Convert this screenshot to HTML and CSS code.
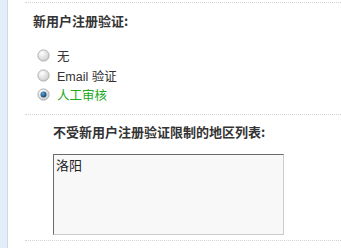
FILE: index.html
```html
<!DOCTYPE html>
<html lang="zh-CN">
<head>
<meta charset="utf-8">
<link rel="stylesheet" href="styles.css">
</head>
<body>
<div class="page">
  <div class="side"></div>
  <div class="main">
    <div class="row row-top">
      <h3 class="title">新用户注册验证:</h3>
      <ul class="options">
        <li class="opt">
          <svg class="radio" width="13" height="13" viewBox="0 0 13 13"><defs><radialGradient id="g1" cx="0.35" cy="0.3" r="0.8"><stop offset="0" stop-color="#ffffff"/><stop offset="1" stop-color="#c9c9c9"/></radialGradient></defs><circle cx="6.5" cy="6.5" r="5.6" fill="url(#g1)" stroke="#a8a8a8" stroke-width="0.9"/></svg>
          <span>无</span>
        </li>
        <li class="opt">
          <svg class="radio" width="13" height="13" viewBox="0 0 13 13"><circle cx="6.5" cy="6.5" r="5.6" fill="url(#g1)" stroke="#a8a8a8" stroke-width="0.9"/></svg>
          <span>Email 验证</span>
        </li>
        <li class="opt on">
          <svg class="radio" width="13" height="13" viewBox="0 0 13 13"><defs><radialGradient id="g2" cx="0.4" cy="0.35" r="0.7"><stop offset="0" stop-color="#5fa3d6"/><stop offset="1" stop-color="#0f3c66"/></radialGradient></defs><circle cx="6.5" cy="6.5" r="5.6" fill="url(#g1)" stroke="#a8a8a8" stroke-width="0.9"/><circle cx="6.5" cy="6.5" r="3" fill="url(#g2)"/></svg>
          <span>人工审核</span>
        </li>
      </ul>
    </div>
    <div class="row row-area">
      <h3 class="title sub">不受新用户注册验证限制的地区列表:</h3>
      <textarea class="area">洛阳</textarea>
    </div>
    <div class="row row-end"></div>
  </div>
</div>
</body>
</html>
```
FILE: styles.css
```css
html, body {
  margin: 0;
  padding: 0;
  background: #ffffff;
}
body {
  font-family: "Liberation Sans", "Noto Sans CJK SC", sans-serif;
  color: #333333;
  font-size: 12px;
}
.page {
  display: flex;
  min-height: 248px;
}
.side {
  width: 7px;
  background: #e2edf8;
  border-right: 1px solid #c9dbee;
  flex: none;
}
.main {
  flex: 1;
  padding-left: 17px;
  padding-top: 2px;
}
.row {
  border-top: 1px dotted #d2d2d2;
}
.title {
  margin: 0;
  font-size: 13px;
  line-height: 16px;
  font-weight: bold;
  color: #333333;
  font-family: "Noto Sans CJK SC", sans-serif;
}
.row-top {
  padding: 10px 0 0 8px;
  height: 101px;
}
.options {
  list-style: none;
  margin: 17px 0 0 0;
  padding: 0 0 0 4px;
}
.opt {
  display: flex;
  align-items: center;
  height: 19.5px;
  gap: 7px;
}
.opt span {
  font-size: 12.5px;
}
.opt.on span {
  color: #22aa22;
}
.radio {
  display: block;
  flex: none;
}
.row-area {
  padding: 9px 0 0 28px;
  height: 116px;
}
.sub {
  margin-bottom: 14px;
}
.area {
  display: block;
  box-sizing: border-box;
  width: 231px;
  height: 81px;
  margin: 0;
  padding: 2px 2px;
  border: 1px solid;
  border-color: #6a6a6a #cccccc #cccccc #6a6a6a;
  background: #f8f8f8;
  font-family: "Noto Sans CJK SC", sans-serif;
  font-size: 13px;
  line-height: 16px;
  color: #222222;
  resize: none;
  outline: none;
}
```
